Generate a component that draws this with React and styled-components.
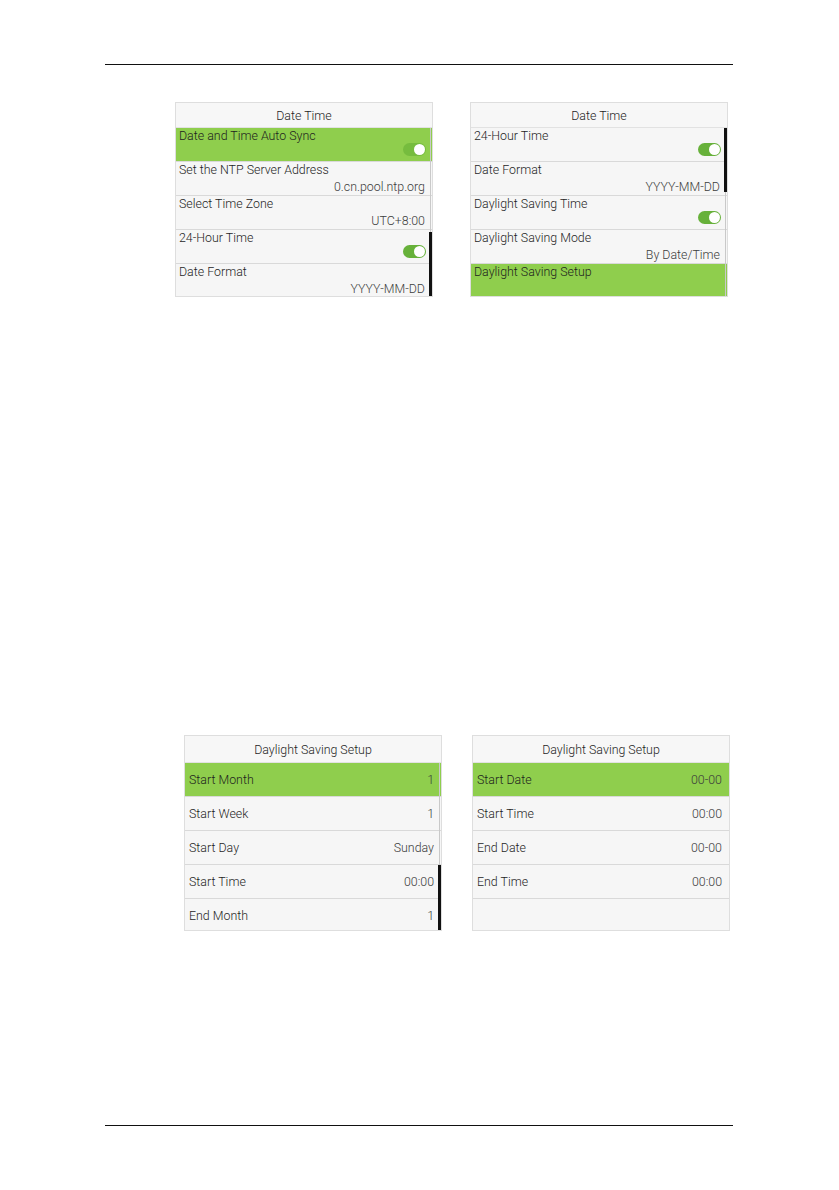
import React from "react";
import styled, { createGlobalStyle } from "styled-components";

const Global = createGlobalStyle`
  html, body { margin: 0; padding: 0; background: #ffffff; }
  body { font-family: Roboto, "Liberation Sans", Arial, sans-serif; }
`;

const GREEN = "#8fce4d";

const Page = styled.div`
  width: 839px;
  height: 1190px;
  display: flex;
  flex-direction: column;
  box-sizing: border-box;
  padding-top: 64px;
`;

const Rule = styled.div`
  margin-left: 105px;
  width: 628px;
  height: 1px;
  background: #111;
  margin-top: ${(p) => p.$top || 0}px;
`;

const PanelRow = styled.div`
  display: flex;
  gap: ${(p) => p.$gap}px;
  padding-left: ${(p) => p.$left}px;
  margin-top: ${(p) => p.$top}px;
`;

const Panel = styled.div`
  width: ${(p) => p.$w}px;
  height: ${(p) => p.$h}px;
  box-sizing: border-box;
  border: 1px solid #dedede;
  background: #f6f6f6;
  display: flex;
  flex-direction: column;
  overflow: hidden;
`;

const Header = styled.div`
  height: ${(p) => p.$h}px;
  flex: none;
  box-sizing: border-box;
  border-bottom: 1px solid #e2e2e2;
  background: #f7f7f7;
  display: flex;
  align-items: center;
  justify-content: center;
  font-size: 12.4px;
  font-weight: 300;
  color: #1e1e1e;
`;

const List = styled.div`
  position: relative;
  flex: 1;
  display: flex;
  flex-direction: column;
`;

const Track = styled.div`
  position: absolute;
  top: 0;
  bottom: 0;
  right: 1px;
  width: 1px;
  background: #c9c9c9;
`;

const Thumb = styled.div`
  position: absolute;
  right: 0px;
  width: 3px;
  background: #111;
`;

const StackRow = styled.div`
  height: 34px;
  flex: none;
  box-sizing: border-box;
  border-bottom: 1px solid #d9d9d9;
  background: ${(p) => (p.$active ? GREEN : "transparent")};
  display: flex;
  flex-direction: column;
  justify-content: space-between;
  padding: 1px 7px 1px 3px;
  font-size: 12.4px;
  font-weight: 300;
  color: #1e1e1e;
`;

const Label = styled.div`
  line-height: 14px;
  white-space: nowrap;
`;

const Value = styled.div`
  align-self: ${(p) => (p.$end ? "flex-end" : "center")};
  line-height: 14px;
  color: #3c3c3c;
  white-space: nowrap;
`;

const ToggleWrap = styled.div`
  align-self: flex-end;
  margin-bottom: 4px;
  margin-right: -1px;
`;

const Toggle = styled.div`
  width: 23px;
  height: 13px;
  border-radius: 7px;
  background: ${(p) => (p.$onGreen ? "#76bc3e" : "#67b13a")};
  position: relative;
  &::after {
    content: "";
    position: absolute;
    right: 1px;
    top: 1px;
    width: 11px;
    height: 11px;
    border-radius: 50%;
    background: #ffffff;
  }
`;

const InlineRow = styled.div`
  height: 34px;
  flex: none;
  box-sizing: border-box;
  border-bottom: 1px solid #d9d9d9;
  background: ${(p) => (p.$active ? GREEN : "transparent")};
  display: flex;
  align-items: center;
  justify-content: space-between;
  padding: 0 7px 0 4px;
  font-size: 12.4px;
  font-weight: 300;
  color: #1e1e1e;
`;

function StackPanel({ title, rows, thumb }) {
  return (
    <Panel $w={258} $h={195}>
      <Header $h={25}>{title}</Header>
      <List>
        {rows.map((r) => (
          <StackRow key={r.label} $active={r.active}>
            <Label>{r.label}</Label>
            {r.toggle ? (
              <ToggleWrap>
                <Toggle $onGreen={r.active} />
              </ToggleWrap>
            ) : (
              <Value $end>{r.value || "\u00a0"}</Value>
            )}
          </StackRow>
        ))}
        <Track />
        {thumb && <Thumb style={{ top: thumb[0], height: thumb[1] }} />}
      </List>
    </Panel>
  );
}

function InlinePanel({ title, rows, thumb }) {
  return (
    <Panel $w={258} $h={196}>
      <Header $h={27}>{title}</Header>
      <List>
        {rows.map((r) => (
          <InlineRow key={r.label} $active={r.active}>
            <Label>{r.label}</Label>
            <Value>{r.value}</Value>
          </InlineRow>
        ))}
        {thumb && (
          <>
            <Track />
            <Thumb style={{ top: thumb[0], height: thumb[1] }} />
          </>
        )}
      </List>
    </Panel>
  );
}

export default function App() {
  return (
    <>
      <Global />
      <Page>
        <Rule />
        <PanelRow $left={175} $gap={37} $top={37}>
          <StackPanel
            title="Date Time"
            thumb={[104, 66]}
            rows={[
              { label: "Date and Time Auto Sync", toggle: true, active: true },
              { label: "Set the NTP Server Address", value: "0.cn.pool.ntp.org" },
              { label: "Select Time Zone", value: "UTC+8:00" },
              { label: "24-Hour Time", toggle: true },
              { label: "Date Format", value: "YYYY-MM-DD" },
            ]}
          />
          <StackPanel
            title="Date Time"
            thumb={[0, 64]}
            rows={[
              { label: "24-Hour Time", toggle: true },
              { label: "Date Format", value: "YYYY-MM-DD" },
              { label: "Daylight Saving Time", toggle: true },
              { label: "Daylight Saving Mode", value: "By Date/Time" },
              { label: "Daylight Saving Setup", active: true },
            ]}
          />
        </PanelRow>
        <PanelRow $left={184} $gap={30} $top={438}>
          <InlinePanel
            title="Daylight Saving Setup"
            thumb={[102, 68]}
            rows={[
              { label: "Start Month", value: "1", active: true },
              { label: "Start Week", value: "1" },
              { label: "Start Day", value: "Sunday" },
              { label: "Start Time", value: "00:00" },
              { label: "End Month", value: "1" },
            ]}
          />
          <InlinePanel
            title="Daylight Saving Setup"
            rows={[
              { label: "Start Date", value: "00-00", active: true },
              { label: "Start Time", value: "00:00" },
              { label: "End Date", value: "00-00" },
              { label: "End Time", value: "00:00" },
            ]}
          />
        </PanelRow>
        <Rule $top={194} />
      </Page>
    </>
  );
}
